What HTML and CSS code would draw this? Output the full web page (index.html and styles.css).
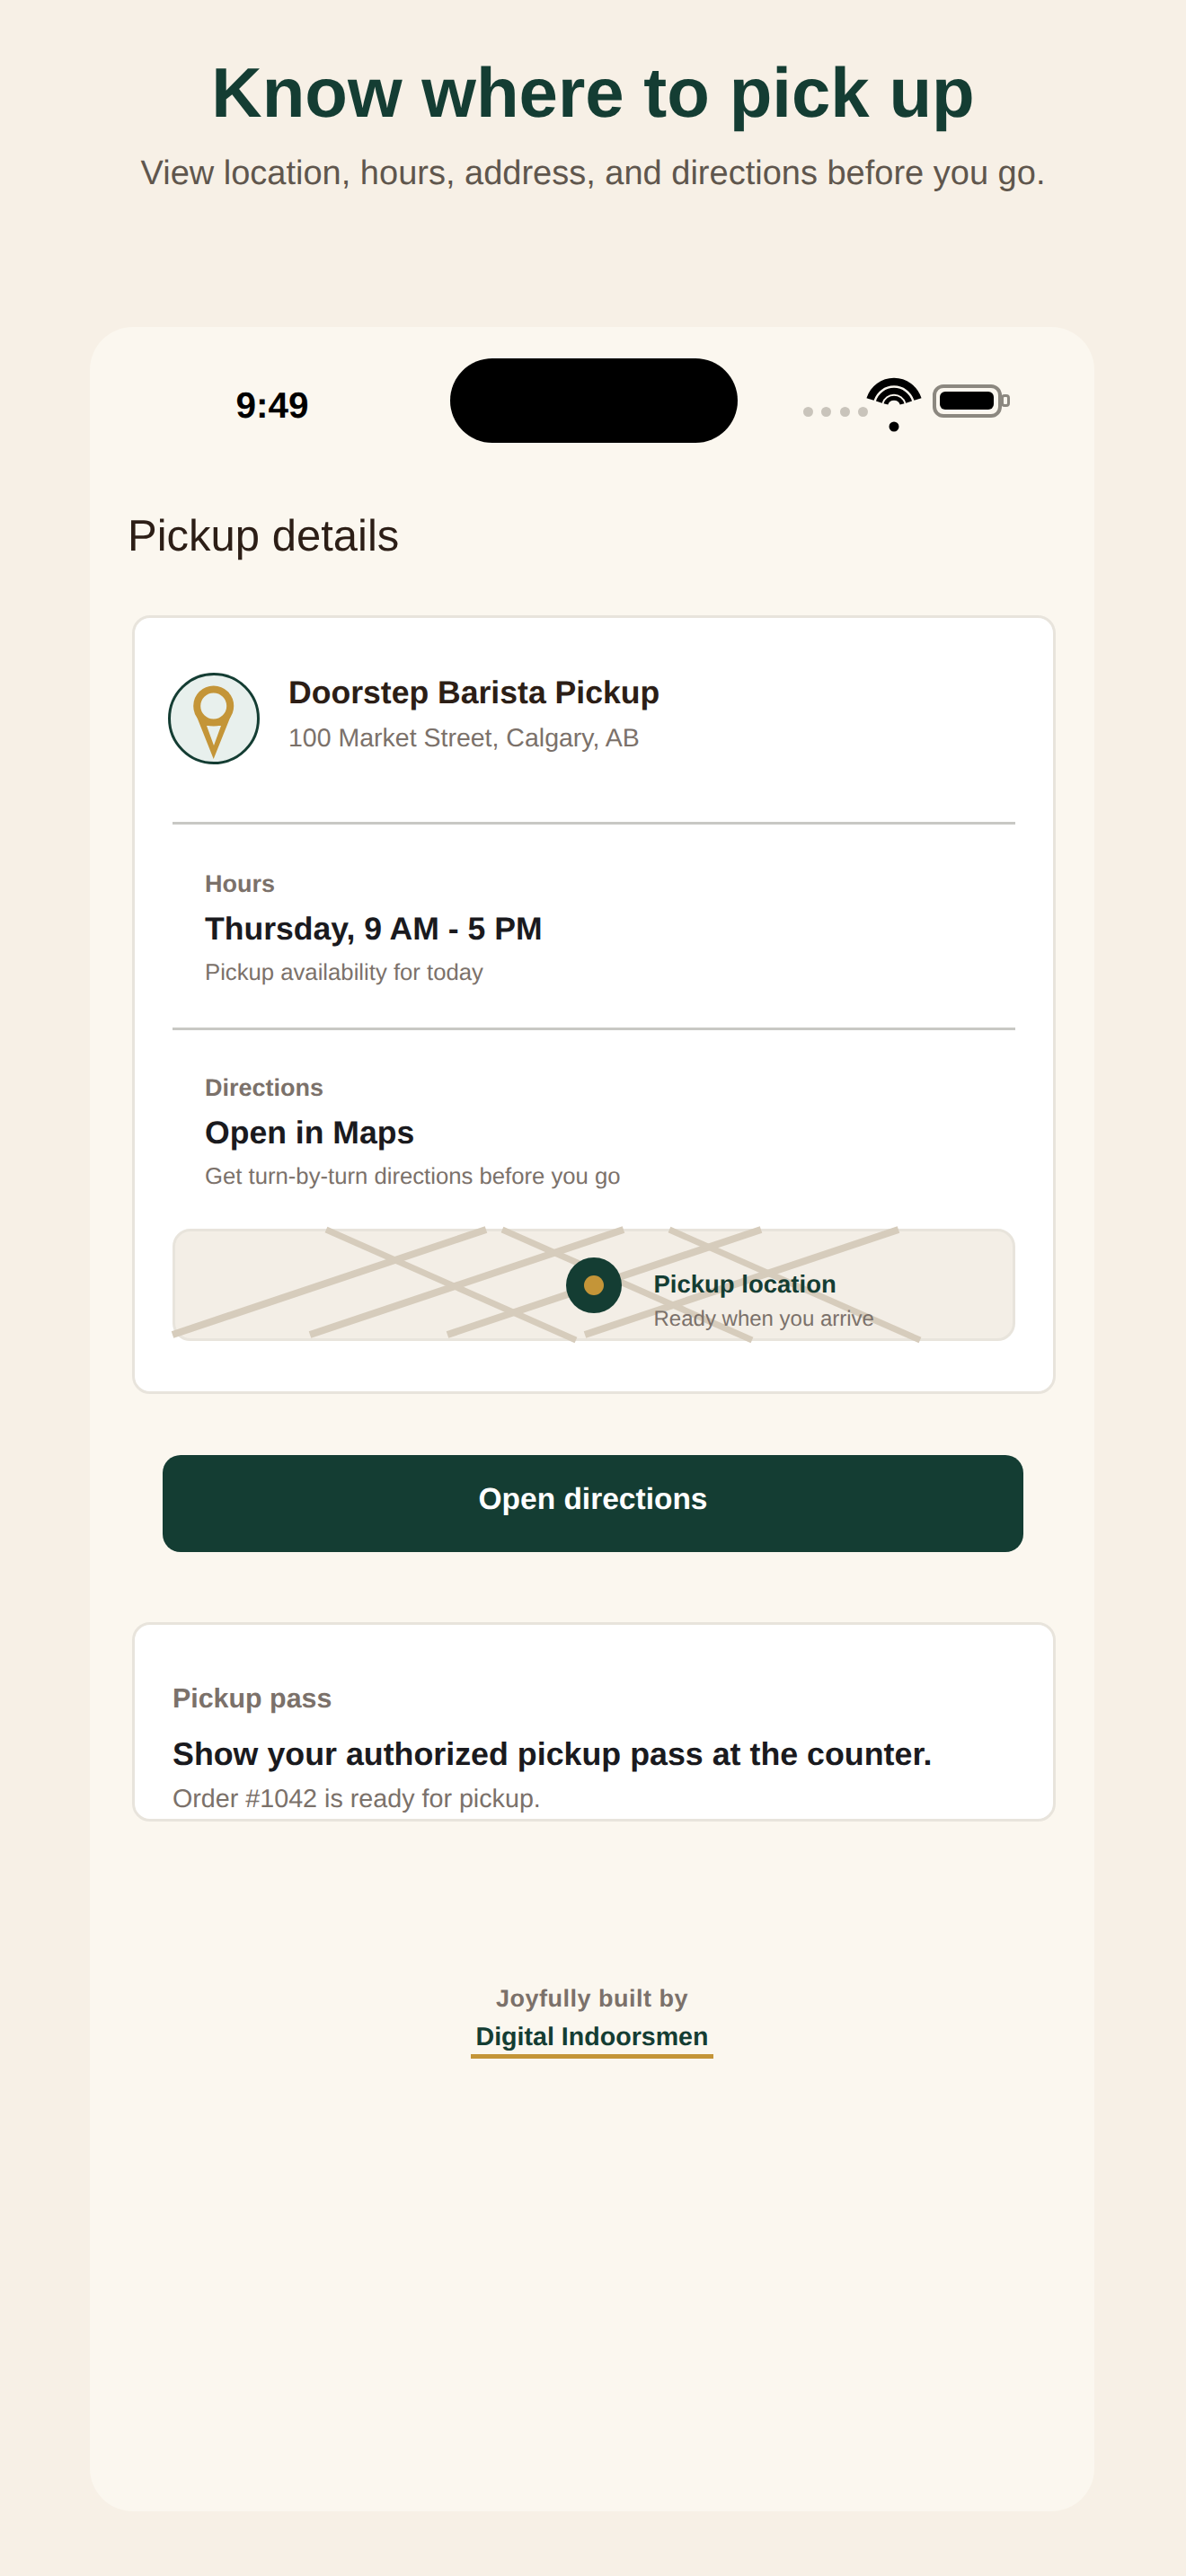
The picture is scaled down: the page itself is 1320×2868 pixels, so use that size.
FILE: index.html
```html
<!DOCTYPE html>
<html lang="en">
<head>
<meta charset="utf-8">
<title>Know where to pick up</title>
<link rel="stylesheet" href="styles.css">
</head>
<body>
<header class="hero">
  <h1 class="hero-title">Know where to pick up</h1>
  <p class="hero-sub">View location, hours, address, and directions before you go.</p>
</header>
<main class="phone">
  <div class="status">
    <span class="time">9:49</span>
    <span class="island"></span>
    <span class="status-icons">
      <span class="dots"><i></i><i></i><i></i><i></i></span>
      <svg class="wifi" width="64" height="62" viewBox="0 0 64 62">
        <g fill="none" stroke="#000">
          <path stroke-width="8.5" d="M5.5 24.6 A27.75 27.75 0 0 1 58.5 24.6"/>
          <path stroke-width="7" d="M15.3 27.6 A17.5 17.5 0 0 1 48.7 27.6"/>
          <path stroke-width="5" d="M22.9 29.9 A9.5 9.5 0 0 1 41.1 29.9"/>
        </g>
        <circle cx="32" cy="55" r="5.5" fill="#000"/>
      </svg>
      <span class="battery"><span class="battery-fill"></span></span>
      <span class="battery-cap"></span>
    </span>
  </div>
  <h2 class="page-title">Pickup details</h2>
  <section class="card details">
    <div class="place">
      <span class="place-icon">
        <svg width="96" height="96" viewBox="0 0 96 96">
          <circle cx="47.7" cy="34" r="18.5" fill="none" stroke="#c49538" stroke-width="8"/>
          <path fill="#c49538" fill-rule="evenodd" d="M29 46 L35 46 L40 54 L55.4 54 L60.4 46 L66.5 46 L47.7 93 Z M40 56 H56 L48 78 Z"/>
        </svg>
      </span>
      <div class="place-text">
        <div class="place-name">Doorstep Barista Pickup</div>
        <div class="place-addr">100 Market Street, Calgary, AB</div>
      </div>
    </div>
    <div class="info">
      <div class="label">Hours</div>
      <div class="value">Thursday, 9 AM - 5 PM</div>
      <div class="note">Pickup availability for today</div>
    </div>
    <div class="info info-last">
      <div class="label">Directions</div>
      <div class="value">Open in Maps</div>
      <div class="note">Get turn-by-turn directions before you go</div>
    </div>
    <div class="map">
      <svg class="roads" width="937" height="125" viewBox="0 0 937 125">
        <g stroke="#d6ccbc" fill="none">
          <g stroke-width="8">
            <path d="M0 118 L349 1"/>
            <path d="M153 118 L502 1"/>
            <path d="M306 118 L655 1"/>
            <path d="M459 118 L808 1"/>
          </g>
          <g stroke-width="7">
            <path d="M171 1 L449 124"/>
            <path d="M367 1 L645 124"/>
            <path d="M553 1 L832 124"/>
          </g>
        </g>
      </svg>
      <div class="map-content">
        <span class="marker"><span class="marker-dot"></span></span>
        <div class="map-text">
          <div class="map-title">Pickup location</div>
          <div class="map-note">Ready when you arrive</div>
        </div>
      </div>
    </div>
  </section>
  <button class="cta">Open directions</button>
  <section class="card pass">
    <div class="pass-label">Pickup pass</div>
    <div class="pass-title">Show your authorized pickup pass at the counter.</div>
    <div class="pass-note">Order #1042 is ready for pickup.</div>
  </section>
  <footer class="credit">
    <div class="credit-by">Joyfully built by</div>
    <a class="credit-link">Digital Indoorsmen</a>
  </footer>
</main>
</body>
</html>
```

FILE: styles.css
```css
* { box-sizing: border-box; }
html, body { margin: 0; padding: 0; }
body {
  height: 2868px;
  background: #f7f0e6;
  font-family: "Liberation Sans", Arial, sans-serif;
  color: #1a1a1e;
  overflow: hidden;
  text-rendering: geometricPrecision;
}
.hero { text-align: center; padding-top: 57px; height: 364px; }
.hero-title { margin: 0; font-size: 78px; line-height: 92px; font-weight: 700; color: #143d33; }
.hero-sub { margin: 20px 0 0; font-size: 38px; line-height: 48px; color: #5f564d; }
.phone {
  width: 1118px;
  height: 2432px;
  margin-left: 100px;
  background: #fbf7ef;
  border-radius: 48px;
  padding: 35px 42px 0;
}
.status { display: flex; align-items: center; height: 94px; }
.time { font-size: 40.5px; font-weight: 700; color: #000; width: 120px; margin: 10px 0 0 101px; text-align: center; }
.island { width: 320px; height: 94px; border-radius: 47px; background: #000; margin-left: 138px; }
.status-icons { display: flex; align-items: center; margin-left: 73px; }
.dots { display: flex; gap: 9.4px; margin-top: 24px; }
.dots i { width: 11px; height: 11px; border-radius: 50%; background: #c9c4bb; }
.wifi { display: block; margin: 10px 0 0 -3.5px; }
.battery { width: 77px; height: 37px; border: 4.5px solid #8c8880; border-radius: 12px; padding: 4.5px; display: block; margin-left: 11px; }
.battery-fill { display: block; height: 100%; background: #000; border-radius: 6px; }
.battery-cap { width: 10px; height: 14px; border: 3.5px solid #8c8880; border-radius: 4px; display: block; margin-left: -1px; }
.page-title { margin: 75px 0 0; font-size: 49px; line-height: 58px; font-weight: 400; color: #2c1e16; }
.card { background: #fff; border: 3px solid #e8e4dc; border-radius: 20px; }
.details { width: 1028px; margin: 59px 0 0 5px; height: 867px; padding: 0 42px; }
.place { display: flex; align-items: center; gap: 32px; height: 230px; border-bottom: 3px solid #c8c8c4; }
.place-icon { width: 102px; height: 102px; border-radius: 50%; background: #e8f0ed; border: 3px solid #143d33; margin: 0 0 4px -5px; flex: none; }
.place-icon svg { display: block; }
.place-text { margin-bottom: 14px; }
.place-name { font-size: 35.6px; line-height: 44px; font-weight: 700; color: #2c1e16; }
.place-addr { font-size: 28.5px; line-height: 38px; margin-top: 10px; color: #7b716a; }
.info { padding: 49px 36px 0; height: 229px; border-bottom: 3px solid #c8c8c4; }
.info-last { border-bottom: 0; height: 221px; padding-top: 47px; }
.label { font-size: 27px; line-height: 34px; font-weight: 700; color: #7b716a; }
.value { font-size: 35.6px; line-height: 44px; font-weight: 700; margin-top: 11px; }
.note { font-size: 25.7px; line-height: 32px; color: #7b716a; margin-top: 11px; }
.map { height: 125px; background: #f3eee6; border: 3px solid #e8e4dc; border-radius: 20px; position: relative; }
.roads { position: absolute; left: -3px; top: -3px; overflow: visible; }
.map-content { position: relative; display: flex; align-items: center; gap: 36px; margin-left: 434.5px; height: 100%; }
.marker { width: 62px; height: 62px; border-radius: 50%; background: #143d33; display: flex; align-items: center; justify-content: center; flex: none; }
.marker-dot { width: 22px; height: 22px; border-radius: 50%; background: #c49538; }
.map-text { padding-top: 36px; }
.map-title { font-size: 27.5px; line-height: 34px; font-weight: 700; color: #143d33; }
.map-note { font-size: 24px; line-height: 30px; margin-top: 7px; color: #7b716a; }
.cta { display: block; width: 958px; height: 108px; margin: 68px 0 0 39px; padding: 0 0 9px; background: #143d33; color: #fff; border: 0; border-radius: 20px; font: 700 33.5px "Liberation Sans", Arial, sans-serif; text-rendering: geometricPrecision; }
.pass { width: 1028px; margin: 78px 0 0 5px; height: 222px; padding: 64px 42px 0; overflow: hidden; }
.pass-label { font-size: 30.4px; line-height: 36px; font-weight: 700; color: #7b716a; }
.pass-title { font-size: 35.8px; line-height: 44px; font-weight: 700; margin-top: 22px; }
.pass-note { font-size: 28.7px; line-height: 36px; color: #7b716a; margin-top: 10px; }
.credit { text-align: center; margin-top: 180px; }
.credit-by { font-size: 27px; line-height: 34px; font-weight: 700; color: #7b716a; letter-spacing: .5px; }
.credit-link { display: inline-block; font-size: 28.6px; line-height: 38px; font-weight: 700; color: #143d33; padding: 7px 6px 0; border-bottom: 5px solid #c49538; }
```
